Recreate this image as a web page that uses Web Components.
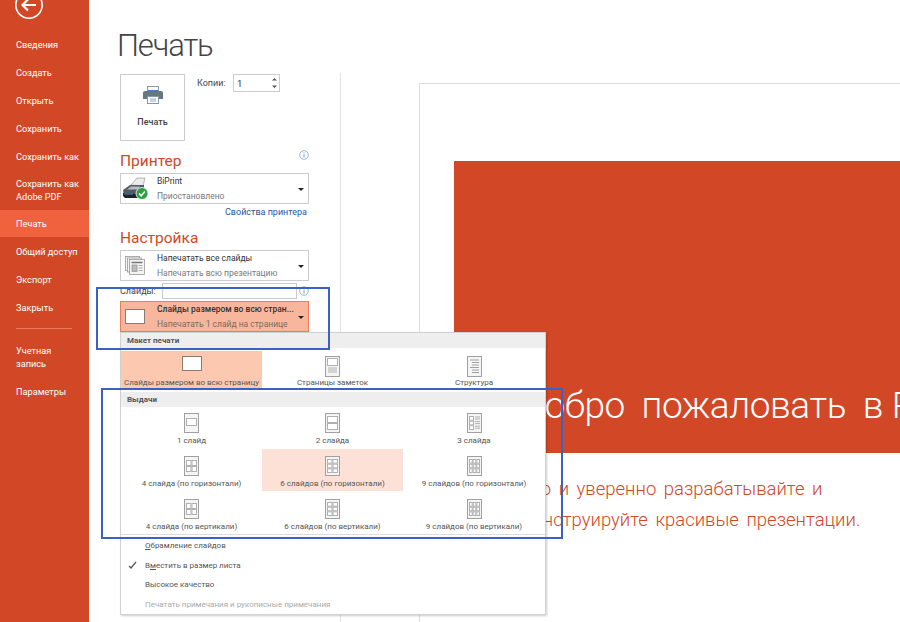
<!DOCTYPE html>
<html lang="ru">
<head>
<meta charset="utf-8">
<title>Печать</title>
<style>
html, body { margin: 0; height: 100%; overflow: hidden; background: #fff; }
body { font-family: Roboto, "Noto Sans", sans-serif; }
</style>
</head>
<body>
<print-app></print-app>

<script>
'use strict';

const ACCENT = '#d24726';

// Иконка страницы: ячейки считаем по сетке, чтобы не повторять svg для каждого пункта.
function pageIcon(cols, rows, top, bottom, lines) {
  const cells = [];
  const left = 2, width = 11;
  const cellW = width / cols, cellH = (bottom - top) / rows;
  for (let r = 0; r < rows; r++) {
    for (let c = 0; c < cols; c++) {
      const x = left + c * cellW + 0.5, y = top + r * cellH + 0.5;
      const w = lines ? 4 : cellW - 1;
      cells.push(`<rect x="${x}" y="${y}" width="${w}" height="${cellH - 1}" fill="#fff" stroke="#b0b0b0"/>`);
      if (lines) {
        cells.push(`<path d="M8 ${y + 0.5}h5M8 ${y + 2.5}h5" stroke="#b0b0b0"/>`);
      }
    }
  }
  return `<svg width="15" height="20" viewBox="0 0 15 20">
    <rect x=".5" y=".5" width="14" height="19" fill="#f5f5f5" stroke="#a0a0a0"/>${cells.join('')}</svg>`;
}

class PrintApp extends HTMLElement {
  constructor() {
    super();
    const shadowRoot = this.attachShadow({mode: 'open'});
    shadowRoot.innerHTML = `
<style>
:host { display: flex; position: relative; width: 900px; height: 622px; overflow: hidden; background: #fff; color: #444; }
.settings { width: 220px; flex: none; padding-left: 31px; }
h1 { margin: 0 0 0 -3px; padding-top: 28px; height: 74px; box-sizing: border-box; font: 300 31px/36px Roboto, sans-serif; letter-spacing: -1.1px; color: #444; }
.top { display: flex; gap: 12px; height: 77px; }
.copies { display: flex; height: 18px; align-items: center; font-size: 9px; color: #444; }
.copies span { width: 36px; }
.wrap { width: 189px; }
.link { text-align: right; font-size: 9px; line-height: 14px; color: #2b579a; padding: 1px 2px 0 0; height: 14px; }
.slides-row { display: flex; align-items: center; height: 20px; font-size: 9px; color: #444; }
.slides-row span { width: 42px; }
.slides-row .field { width: 133px; height: 14px; border: 1px solid #ccc; background: #fff; }
.divider { width: 1px; flex: none; background: #e2e2e2; margin-top: 73px; }
</style>
<backstage-nav></backstage-nav>
<div class="settings">
  <h1>Печать</h1>
  <div class="top">
    <print-button></print-button>
    <div class="copies"><span>Копии:</span><copies-spinner></copies-spinner></div>
  </div>
  <div class="wrap">
    <section-heading info>Принтер</section-heading>
    <drop-down title-text="BiPrint" sub="Приостановлено" icon="printer"></drop-down>
    <div class="link">Свойства принтера</div>
    <section-heading style="margin-top:9px">Настройка</section-heading>
    <drop-down title-text="Напечатать все слайды" sub="Напечатать всю презентацию" icon="stack"></drop-down>
    <div class="slides-row"><span>Слайды:</span><span class="field"></span><info-icon style="margin-left:2px"></info-icon></div>
    <drop-down active title-text="Слайды размером во всю стран..." sub="Напечатать 1 слайд на странице" icon="slide"></drop-down>
  </div>
</div>
<div class="divider"></div>
<slide-preview></slide-preview>
<layout-menu></layout-menu>
<blue-frame style="left:96px;top:287px;width:230px;height:59px"></blue-frame>
<blue-frame style="left:101px;top:388px;width:458px;height:147px"></blue-frame>
`;
  }
}

class BackstageNav extends HTMLElement {
  constructor() {
    super();
    const shadowRoot = this.attachShadow({mode: 'open'});
    const items = [
      ['Сведения'], ['Создать'], ['Открыть'], ['Сохранить'], ['Сохранить как'],
      ['Сохранить как<br>Adobe PDF', 'tall'], ['Печать', 'on'], ['Общий доступ'], ['Экспорт'], ['Закрыть']
    ];
    shadowRoot.innerHTML = `
<style>
:host { display: block; width: 89px; flex: none; background: ${ACCENT}; color: #fff; font-size: 9.2px; }
.back { height: 30px; padding-left: 14px; overflow: hidden; }
.back svg { display: block; margin-top: -10px; }
a { display: flex; align-items: center; height: 28px; padding-left: 16px; line-height: 13px; white-space: nowrap; }
a.tall { height: 40px; }
a.on { background: #f0623e; height: 27px; }
hr { border: 0; height: 1px; background: #e87a5c; margin: 7px 0 11px 16px; width: 56px; }
</style>
<div class="back">
  <svg width="30" height="30" viewBox="0 0 30 30" fill="none" stroke="#fff">
    <circle cx="15" cy="15" r="13.2" stroke-width="1.6"/>
    <path d="M22 15H9M14 9.5 8.5 15l5.5 5.5" stroke-width="2.2"/>
  </svg>
</div>
${items.map(([text, cls]) => `<a class="${cls || ''}">${text}</a>`).join('')}
<hr>
<a class="tall" style="height:34px">Учетная<br>запись</a>
<a style="margin-top:3px">Параметры</a>
`;
  }
}

class PrintButton extends HTMLElement {
  constructor() {
    super();
    const shadowRoot = this.attachShadow({mode: 'open'});
    shadowRoot.innerHTML = `
<style>
:host { display: flex; flex-direction: column; align-items: center; box-sizing: border-box; width: 65px; height: 67px; border: 1px solid #ccc; font-size: 9px; font-weight: 500; color: #444; }
svg { margin-top: 11px; display: block; }
span { margin-top: 11px; line-height: 14px; }
</style>
<svg width="20" height="18" viewBox="0 0 20 18">
  <rect x="4.5" y=".5" width="11" height="6" fill="#fff" stroke="#8a96a3"/>
  <path d="M2 5h16a2 2 0 0 1 2 2v6H0V7a2 2 0 0 1 2-2z" fill="#69757f"/>
  <rect x="5" y="4" width="10" height="2" fill="#3f7cc4"/>
  <rect x="4.5" y="10.5" width="11" height="7" fill="#fff" stroke="#8a96a3"/>
  <path d="M7 13h6M7 15h6" stroke="#7fa8d4"/>
</svg>
<span>Печать</span>
`;
  }
}

class CopiesSpinner extends HTMLElement {
  constructor() {
    super();
    const shadowRoot = this.attachShadow({mode: 'open'});
    shadowRoot.innerHTML = `
<style>
:host { display: flex; justify-content: space-between; align-items: center; box-sizing: border-box; width: 47px; height: 18px; border: 1px solid #ccc; padding: 0 2px 0 3px; font-size: 9.5px; color: #333; }
svg { display: block; }
</style>
<span>1</span>
<svg width="5" height="12" viewBox="0 0 5 12" fill="#555"><path d="M2.5 1 5 3.5H0zM0 8.5h5L2.5 11z"/></svg>
`;
  }
}

class InfoIcon extends HTMLElement {
  constructor() {
    super();
    const shadowRoot = this.attachShadow({mode: 'open'});
    shadowRoot.innerHTML = `
<style>:host { display: inline-flex; } svg { display: block; }</style>
<svg width="10" height="10" viewBox="0 0 10 10" fill="none" stroke="#7d9fd0">
  <circle cx="5" cy="5" r="4.3" stroke-width=".8"/>
  <path d="M5 4.2v3.3M5 2.4v1" stroke-width="1"/>
</svg>
`;
  }
}

class SectionHeading extends HTMLElement {
  constructor() {
    super();
    const shadowRoot = this.attachShadow({mode: 'open'});
    shadowRoot.innerHTML = `
<style>
:host { display: flex; justify-content: space-between; height: 22px; font-size: 15.5px; line-height: 21px; color: ${ACCENT}; }
info-icon { display: none; }
:host([info]) info-icon { display: inline-flex; height: 10px; margin-top: -1px; }
</style>
<slot></slot>
<info-icon></info-icon>
`;
  }
}

const DROPDOWN_ICONS = {
  printer: `<svg width="27" height="23" viewBox="0 0 27 23" style="margin-left:-3px">
    <path d="M9 8 15 1h8l-2 8z" fill="#ececec" stroke="#9a9a9a" stroke-width=".7"/>
    <path d="M1 13l7-5h14v6l-4 6H2z" fill="#555a60"/>
    <path d="M1 16l17 1v4H3l-2-2z" fill="#1f2226"/>
    <path d="M5 12.5l4-3h9l-2 3z" fill="#b4bcc4"/>
    <path d="M2 17h9" stroke="#4f8fd0"/>
    <circle cx="20" cy="16.5" r="6" fill="#2f9e44" stroke="#fff" stroke-width=".8"/>
    <path d="M17 16.5l2.2 2.3 3.6-4.3" fill="none" stroke="#fff" stroke-width="1.5"/>
  </svg>`,
  stack: `<svg width="20" height="19" viewBox="0 0 20 19" fill="#f4f4f4" stroke="#9a9a9a" stroke-width=".8">
    <rect x=".5" y=".5" width="14" height="14"/><rect x="2.5" y="2" width="14" height="14"/><rect x="4.5" y="3.5" width="15" height="15"/>
    <path d="M6.5 6.5h11" stroke-width="1.5" stroke="#777"/><rect x="7" y="9" width="5" height="6.5" fill="#bbb"/><path d="M13.5 9.5h4M13.5 12h4M13.5 14.5h4"/>
  </svg>`,
  slide: `<svg width="20" height="15" viewBox="0 0 20 15"><rect x=".5" y=".5" width="19" height="14" fill="#fff" stroke="#8a7a70"/></svg>`
};

class DropDown extends HTMLElement {
  constructor() {
    super();
    this.attachShadow({mode: 'open'});
  }

  connectedCallback() {
    const icon = this.getAttribute('icon');
    this.shadowRoot.innerHTML = `
<style>
:host { display: flex; align-items: center; box-sizing: border-box; width: 189px; height: 31px; border: 1px solid #ccc; font-size: 8.5px; line-height: 15px; color: #444; background: #fff; }
:host([active]) { background: #f8b79d; border-color: #ed7d58; }
.pic { width: 32px; padding-left: 4px; flex: none; }
.pic svg { display: block; }
.text { flex: 1; min-width: 0; white-space: nowrap; }
.sub { color: #7a7a7a; }
:host([active]) .sub { color: #7d6a60; }
.title { color: #333; }
:host([active]) .title { font-weight: 500; color: #333; }
.caret { width: 0; height: 0; margin: 2px 4px 0 3px; border: 3px solid transparent; border-top: 3px solid #222; border-bottom: 0; }
</style>
<div class="pic">${DROPDOWN_ICONS[icon]}</div>
<div class="text">
  <div class="title">${this.getAttribute('title-text')}</div>
  <div class="sub">${this.getAttribute('sub')}</div>
</div>
<span class="caret"></span>
`;
  }
}

class SlidePreview extends HTMLElement {
  constructor() {
    super();
    const shadowRoot = this.attachShadow({mode: 'open'});
    shadowRoot.innerHTML = `
<style>
:host { display: block; flex: 1; min-width: 0; padding: 83px 0 0 78px; overflow: hidden; }
.page { box-sizing: border-box; height: 600px; border: 1px solid #dcdcdc; border-right: 0; padding: 77px 0 0 34px; overflow: hidden; background: #fff; }
.banner { height: 292px; background: ${ACCENT}; color: #fff; padding: 222px 0 0 64px; box-sizing: border-box; white-space: nowrap; overflow: hidden; font: 300 37px/46px Roboto, sans-serif; letter-spacing: -.4px; word-spacing: 8px; }
.banner span { margin-left: -8px; }
.lead { margin-top: 21px; color: ${ACCENT}; font: 300 18.5px/31px Roboto, sans-serif; word-spacing: 3px; white-space: nowrap; }
.lead div:first-child { margin-left: 47px; }
.lead div:last-child { margin-left: 69px; }
</style>
<div class="page">
  <div class="banner">Добро пожаловать в <span>PowerPoint</span></div>
  <div class="lead">
    <div>Легко и уверенно разрабатывайте и</div>
    <div>конструируйте красивые презентации.</div>
  </div>
</div>
`;
  }
}

class LayoutItem extends HTMLElement {
  constructor() {
    super();
    const shadowRoot = this.attachShadow({mode: 'open'});
    shadowRoot.innerHTML = `
<style>
:host { display: flex; flex-direction: column; align-items: center; height: 100%; box-sizing: border-box; font-size: 8px; line-height: 12px; color: #555; white-space: nowrap; }
:host([selected]) { background: #fde1d6; }
:host([strong]) { background: #fcc9b0; }
.icon { height: 26px; display: flex; align-items: flex-end; }
.label { margin-top: var(--label-gap, 2px); }
</style>
<div class="icon"><slot name="icon"></slot></div>
<div class="label"><slot></slot></div>
`;
  }
}

class LayoutMenu extends HTMLElement {
  constructor() {
    super();
    const shadowRoot = this.attachShadow({mode: 'open'});
    const handouts = [
      ['1 слайд', pageIcon(1, 1, 5, 13)],
      ['2 слайда', pageIcon(1, 2, 3, 17)],
      ['3 слайда', pageIcon(1, 3, 3, 17, true)],
      ['4 слайда (по горизонтали)', pageIcon(2, 2, 4, 16)],
      ['6 слайдов (по горизонтали)', pageIcon(2, 3, 3, 17), true],
      ['9 слайдов (по горизонтали)', pageIcon(3, 3, 3, 17)],
      ['4 слайда (по вертикали)', pageIcon(2, 2, 4, 16)],
      ['6 слайдов (по вертикали)', pageIcon(2, 3, 3, 17)],
      ['9 слайдов (по вертикали)', pageIcon(3, 3, 3, 17)]
    ];
    const noteIcon = `<svg width="15" height="21" viewBox="0 0 15 21"><rect x=".5" y=".5" width="14" height="20" fill="#f5f5f5" stroke="#a0a0a0"/><rect x="2.5" y="2.5" width="10" height="7" fill="#fff" stroke="#b0b0b0"/><path d="M3 12h9M3 14h9M3 16h9" stroke="#b0b0b0"/></svg>`;
    const outlineIcon = `<svg width="15" height="21" viewBox="0 0 15 21"><rect x=".5" y=".5" width="14" height="20" fill="#f5f5f5" stroke="#a0a0a0"/><path d="M3 4h9M5 6.5h7M5 9h7M3 11.5h9M5 14h7M5 16.5h7" stroke="#a0a0a0"/></svg>`;
    const slideIcon = `<svg width="20" height="15" viewBox="0 0 20 15"><rect x=".5" y=".5" width="19" height="14" fill="#fff" stroke="#8a7a70"/></svg>`;
    shadowRoot.innerHTML = `
<style>
:host { position: absolute; left: 120px; top: 332px; width: 426px; height: 283px; box-sizing: border-box; background: #fff; border: 1px solid #d0d0d0; box-shadow: 1px 1px 2px rgba(0,0,0,.2); }
svg { display: block; }
.band { height: 15px; background: #eeeeee; padding-left: 6px; font-size: 8px; font-weight: 700; line-height: 15px; color: #555; }
.grid { display: grid; grid-template-columns: 141px 141px 142px; }
.grid.print { height: 39px; margin: 3px 0 2px; --label-gap: 0; }
.grid.handouts { grid-auto-rows: 42px; height: 126px; }
.grid.handouts layout-item:nth-child(n+4) { padding-top: 1px; }
.grid.handouts layout-item:nth-child(n+7) { padding-top: 2px; }
.opts { border-top: 1px solid #ddd; margin-top: 1px; padding-top: 1px; font-size: 8px; color: #555; }
.opt { display: flex; align-items: center; height: 19.5px; padding-left: 24px; position: relative; }
.opt u { text-decoration-thickness: 1px; }
.opt.off { color: #aaa; }
.check { position: absolute; left: 7px; top: 5px; }
</style>
<div class="band">Макет печати</div>
<div class="grid print">
  <layout-item strong><span slot="icon" style="margin-bottom:6px">${slideIcon}</span>Слайды размером во всю страницу</layout-item>
  <layout-item><span slot="icon">${noteIcon}</span>Страницы заметок</layout-item>
  <layout-item><span slot="icon">${outlineIcon}</span>Структура</layout-item>
</div>
<div class="band">Выдачи</div>
<div class="grid handouts">
  ${handouts.map(([label, icon, sel]) => `<layout-item ${sel ? 'selected' : ''}><span slot="icon">${icon}</span>${label}</layout-item>`).join('')}
</div>
<div class="opts">
  <div class="opt"><span><u>О</u>брамление слайдов</span></div>
  <div class="opt"><svg class="check" width="9" height="9" viewBox="0 0 9 9" fill="none" stroke="#555" stroke-width="1.2"><path d="M1 5l2 2 5-6"/></svg><span>В<u>м</u>естить в размер листа</span></div>
  <div class="opt">Высокое качество</div>
  <div class="opt off">Печатать примечания и рукописные примечания</div>
</div>
`;
  }
}

class BlueFrame extends HTMLElement {
  constructor() {
    super();
    const shadowRoot = this.attachShadow({mode: 'open'});
    shadowRoot.innerHTML = `
<style>
:host { position: absolute; display: block; border: 2px solid #3a62c4; pointer-events: none; }
</style>
`;
  }
}

customElements.define('info-icon', InfoIcon);
customElements.define('section-heading', SectionHeading);
customElements.define('drop-down', DropDown);
customElements.define('copies-spinner', CopiesSpinner);
customElements.define('print-button', PrintButton);
customElements.define('backstage-nav', BackstageNav);
customElements.define('slide-preview', SlidePreview);
customElements.define('layout-item', LayoutItem);
customElements.define('layout-menu', LayoutMenu);
customElements.define('blue-frame', BlueFrame);
customElements.define('print-app', PrintApp);
</script>
</body>
</html>
